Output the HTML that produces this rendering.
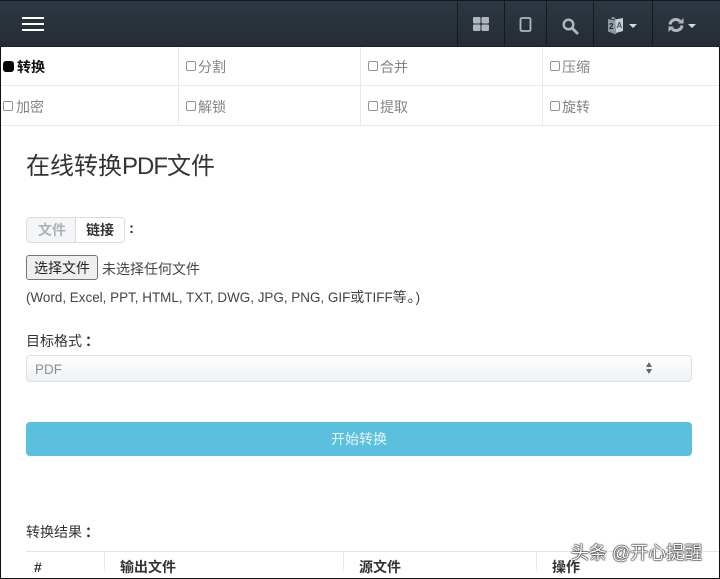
<!DOCTYPE html>
<html lang="zh">
<head>
<meta charset="utf-8">
<title>在线转换PDF文件</title>
<style>
html,body{margin:0;padding:0;background:#fff}
body{width:720px;height:579px;position:relative;overflow:hidden;font-family:"Liberation Sans","Noto Sans CJK SC",sans-serif;color:#333}
.a{position:absolute;white-space:nowrap}
.nav{left:0;top:0;width:720px;height:47px;background:linear-gradient(#2e3742,#252c35);box-sizing:border-box;border-top:1px solid #14181d;border-bottom:1px solid #1d2229}
.div{top:0;width:1px;height:46px;background:#151a20}
.bar{left:22px;width:22px;height:2px;background:#fff}
.h{height:1px;background:#e8e8e8}
.v{width:1px;background:#e8e8e8}
.cb{width:8px;height:8px;border:1px solid #8f9499;border-radius:2px;box-sizing:content-box}
.t{font-size:14px;line-height:18px;color:#808488}
.lb{font-size:14px;line-height:18px;color:#333;font-weight:700}
.m{font-size:14px;line-height:18px;color:#333}
.c{font-family:"Liberation Sans","Noto Sans CJK TC",sans-serif;font-weight:700;margin-left:3px}
.edge{background:#111}
</style>
</head>
<body>
<div class="a nav"></div>
<div class="a bar" style="top:17px"></div>
<div class="a bar" style="top:23px"></div>
<div class="a bar" style="top:29px"></div>
<div class="a div" style="left:457px"></div>
<div class="a div" style="left:504px"></div>
<div class="a div" style="left:546px"></div>
<div class="a div" style="left:593px"></div>
<div class="a div" style="left:652px"></div>

<svg class="a" style="left:472px;top:16px" width="18" height="16" viewBox="0 0 18 16"><g fill="#b0b8be"><rect x="1" y="1" width="7.500" height="6.500" rx="1.200"/><rect x="9.500" y="1" width="7.500" height="6.500" rx="1.200"/><rect x="1" y="8.500" width="7.500" height="6.500" rx="1.200"/><rect x="9.500" y="8.500" width="7.500" height="6.500" rx="1.200"/></g></svg>
<svg class="a" style="left:519px;top:16px" width="13" height="17" viewBox="0 0 13 17"><rect x="1.500" y="2" width="10" height="13" rx="1.500" fill="none" stroke="#b0b8be" stroke-width="1.800"/></svg>
<svg class="a" style="left:561px;top:17px" width="18" height="18" viewBox="0 0 18 18"><circle cx="7.500" cy="7.500" r="4.800" fill="none" stroke="#b0b8be" stroke-width="2.400"/><path d="M11.500 11.500L16 16" stroke="#b0b8be" stroke-width="3" stroke-linecap="round"/></svg>
<svg class="a" style="left:607px;top:16px" width="18" height="20" viewBox="0 0 18 20"><path d="M1 3l7 1.500 1 14-8-3z" fill="#8f9aa1"/><path d="M8 3.500l8-1.500v13l-7 2z" fill="#c8ced3"/><path d="M4 1.500l3-.5 2 2.500-4-.5z" fill="#8f9aa1"/><text x="2" y="13" font-size="8" font-weight="700" fill="#1f262d" font-family="Liberation Sans">2</text><text x="9.500" y="12" font-size="8" font-weight="700" fill="#4a535b" font-family="Liberation Sans">A</text></svg>
<div class="a" style="left:629px;top:24px;width:0;height:0;border-left:4px solid transparent;border-right:4px solid transparent;border-top:4px solid #d5dade"></div>
<svg class="a" style="left:667px;top:16px" width="18" height="18" viewBox="0 0 18 18"><path d="M3 8.500C3.400 5.500 5.800 3.500 8.800 3.500c1.700 0 3.200.7 4.200 1.800" fill="none" stroke="#b0b8be" stroke-width="3"/><path d="M11 7.500h5.500V2z" fill="#b0b8be"/><path d="M15 9.500c-.4 3-2.800 5-5.800 5-1.700 0-3.200-.7-4.200-1.800" fill="none" stroke="#b0b8be" stroke-width="3"/><path d="M7 10.500H1.500V16z" fill="#b0b8be"/></svg>
<div class="a" style="left:688px;top:24px;width:0;height:0;border-left:4px solid transparent;border-right:4px solid transparent;border-top:4px solid #d5dade"></div>

<div class="a v" style="left:178px;top:47px;height:79px"></div>
<div class="a v" style="left:360px;top:47px;height:79px"></div>
<div class="a v" style="left:542px;top:47px;height:79px"></div>
<div class="a h" style="left:0;top:85px;width:720px"></div>
<div class="a h" style="left:0;top:125px;width:720px"></div>

<div class="a" style="left:3px;top:61px;width:11px;height:11px;border-radius:3px;background:#050505"></div>
<div class="a lb" style="left:17px;top:58px;color:#111">转换</div>
<div class="a cb" style="left:186px;top:61px"></div><div class="a t" style="left:198px;top:58px">分割</div>
<div class="a cb" style="left:368px;top:61px"></div><div class="a t" style="left:380px;top:58px">合并</div>
<div class="a cb" style="left:550px;top:61px"></div><div class="a t" style="left:562px;top:58px">压缩</div>
<div class="a cb" style="left:3px;top:101px"></div><div class="a t" style="left:16px;top:98px">加密</div>
<div class="a cb" style="left:186px;top:101px"></div><div class="a t" style="left:198px;top:98px">解锁</div>
<div class="a cb" style="left:368px;top:101px"></div><div class="a t" style="left:380px;top:98px">提取</div>
<div class="a cb" style="left:550px;top:101px"></div><div class="a t" style="left:562px;top:98px">旋转</div>

<div class="a" style="left:26px;top:151px;font-size:24px;line-height:32px;color:#333">在线转换<span style="letter-spacing:-1px">PDF</span>文件</div>

<div class="a" style="left:26px;top:217px;width:99px;height:26px;box-sizing:border-box;border:1px solid #d5dde3;border-radius:4px;background:#fff"></div>
<div class="a" style="left:27px;top:218px;width:48px;height:24px;background:#f3f5f7;border-right:1px solid #d5dde3;border-radius:3px 0 0 3px"></div>
<div class="a" style="left:38px;top:221px;font-size:14px;line-height:18px;font-weight:700;color:#aab2b9">文件</div>
<div class="a" style="left:86px;top:221px;font-size:14px;line-height:18px;font-weight:700;color:#333">链接</div>
<div class="a" style="left:129px;top:220px;font-size:15px;line-height:18px;font-weight:700;color:#333">:</div>

<div class="a" style="left:26px;top:255px;width:72px;height:25px;box-sizing:border-box;border:1px solid #767676;border-radius:3px;background:#efefef;font-size:14px;line-height:24px;text-align:center;color:#222">选择文件</div>
<div class="a m" style="left:102px;top:260px;color:#444">未选择任何文件</div>
<div class="a" style="left:26px;top:288px;font-size:13.450px;line-height:18px;color:#444">(Word, Excel, PPT, HTML, TXT, DWG, JPG, PNG, GIF<span style="font-size:14px">或</span>TIFF<span style="font-size:14px;letter-spacing:1px">等。</span>)</div>

<div class="a m" style="left:26px;top:332px">目标格式<span class="c">：</span></div>
<div class="a" style="left:26px;top:355px;width:666px;height:27px;box-sizing:border-box;border:1px solid #d8e0e5;border-radius:4px;background:linear-gradient(#fff,#eff1f3)"></div>
<div class="a" style="left:35px;top:361px;font-size:13.500px;line-height:18px;color:#8a8f94">PDF</div>
<div class="a" style="left:646px;top:362px;width:0;height:0;border-left:3.500px solid transparent;border-right:3.500px solid transparent;border-bottom:5px solid #666"></div>
<div class="a" style="left:646px;top:369px;width:0;height:0;border-left:3.500px solid transparent;border-right:3.500px solid transparent;border-top:5px solid #666"></div>

<div class="a" style="left:26px;top:422px;width:666px;height:34px;border-radius:4px;background:#5bc0de;color:#e8f6fb;font-size:14px;line-height:35px;text-align:center">开始转换</div>

<div class="a m" style="left:26px;top:523px">转换结果<span class="c">：</span></div>
<div class="a h" style="left:26px;top:551px;width:694px;background:#e4e4e4"></div>
<div class="a v" style="left:104px;top:551px;height:20px"></div>
<div class="a v" style="left:343px;top:551px;height:20px"></div>
<div class="a v" style="left:536px;top:551px;height:20px"></div>
<div class="a lb" style="left:34px;top:558px">#</div>
<div class="a lb" style="left:120px;top:558px">输出文件</div>
<div class="a lb" style="left:359px;top:558px">源文件</div>
<div class="a lb" style="left:552px;top:558px">操作</div>

<div class="a" style="left:571px;top:541px;font-size:18px;line-height:24px;color:#fff;text-shadow:0 0 1px #222,0 0 1px #222,0 0 1px #222,0 0 2px #444">头条 @开心提醒</div>

<div class="a edge" style="left:0;top:47px;width:1px;height:532px"></div>
<div class="a edge" style="left:719px;top:47px;width:1px;height:532px"></div>
<div class="a edge" style="left:0;top:578px;width:720px;height:1px"></div>
</body>
</html>
